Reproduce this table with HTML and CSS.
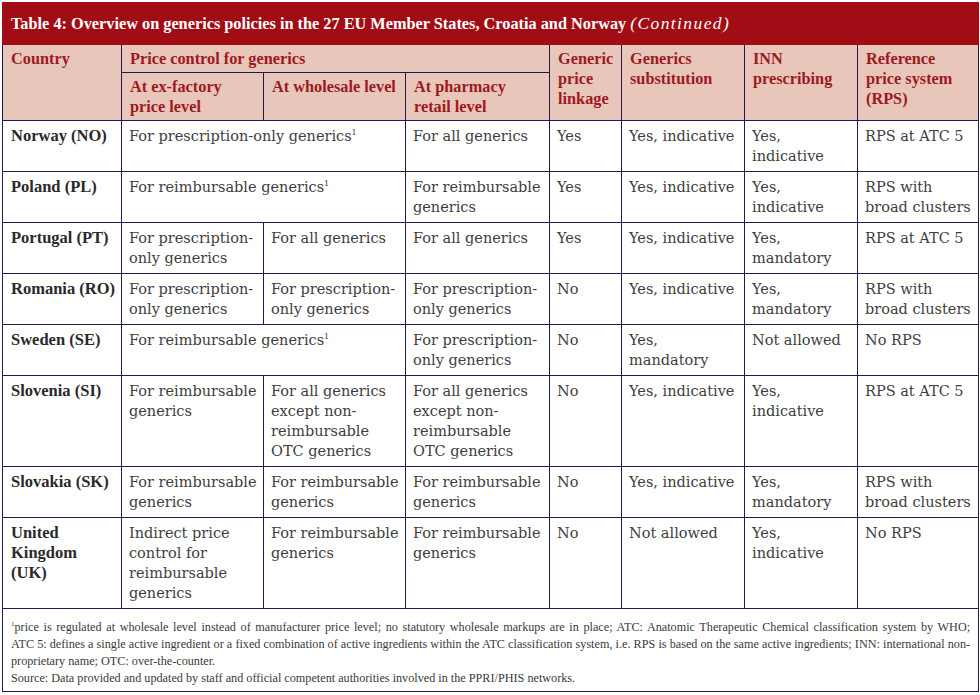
FILE: index.html
```html
<!DOCTYPE html>
<html>
<head>
<meta charset="utf-8">
<link rel="stylesheet" href="styles.css">
</head>
<body>
<table class="gtable">
  <colgroup>
    <col class="c-country">
    <col class="c-ex">
    <col class="c-whole">
    <col class="c-pharm">
    <col class="c-link">
    <col class="c-subst">
    <col class="c-inn">
    <col class="c-rps">
  </colgroup>
  <thead>
    <tr>
      <th class="title" colspan="8">Table 4: Overview on generics policies in the 27 EU Member States, Croatia and Norway <i>(Continued)</i></th>
    </tr>
    <tr class="h1">
      <th rowspan="2">Country</th>
      <th colspan="3">Price control for generics</th>
      <th rowspan="2">Generic price linkage</th>
      <th rowspan="2">Generics substitution</th>
      <th rowspan="2">INN prescribing</th>
      <th rowspan="2">Reference price system (RPS)</th>
    </tr>
    <tr class="h2">
      <th>At ex-factory price level</th>
      <th>At wholesale level</th>
      <th>At pharmacy retail level</th>
    </tr>
  </thead>
  <tbody>
    <tr>
      <td class="country">Norway (NO)</td>
      <td colspan="2">For prescription-only generics<sup>1</sup></td>
      <td>For all generics</td>
      <td>Yes</td>
      <td>Yes, indicative</td>
      <td>Yes, indicative</td>
      <td>RPS at ATC 5</td>
    </tr>
    <tr>
      <td class="country">Poland (PL)</td>
      <td colspan="2">For reimbursable generics<sup>1</sup></td>
      <td>For reimbursable generics</td>
      <td>Yes</td>
      <td>Yes, indicative</td>
      <td>Yes, indicative</td>
      <td>RPS with broad clusters</td>
    </tr>
    <tr>
      <td class="country">Portugal (PT)</td>
      <td>For prescription-only generics</td>
      <td>For all generics</td>
      <td>For all generics</td>
      <td>Yes</td>
      <td>Yes, indicative</td>
      <td>Yes, mandatory</td>
      <td>RPS at ATC 5</td>
    </tr>
    <tr>
      <td class="country">Romania (RO)</td>
      <td>For prescription-only generics</td>
      <td>For prescription-only generics</td>
      <td>For prescription-only generics</td>
      <td>No</td>
      <td>Yes, indicative</td>
      <td>Yes, mandatory</td>
      <td>RPS with broad clusters</td>
    </tr>
    <tr>
      <td class="country">Sweden (SE)</td>
      <td colspan="2">For reimbursable generics<sup>1</sup></td>
      <td>For prescription-only generics</td>
      <td>No</td>
      <td>Yes,<br>mandatory</td>
      <td>Not allowed</td>
      <td>No RPS</td>
    </tr>
    <tr>
      <td class="country">Slovenia (SI)</td>
      <td>For reimbursable generics</td>
      <td>For all generics except non-reimbursable OTC generics</td>
      <td>For all generics except non-reimbursable OTC generics</td>
      <td>No</td>
      <td>Yes, indicative</td>
      <td>Yes, indicative</td>
      <td>RPS at ATC 5</td>
    </tr>
    <tr>
      <td class="country">Slovakia (SK)</td>
      <td>For reimbursable generics</td>
      <td>For reimbursable generics</td>
      <td>For reimbursable generics</td>
      <td>No</td>
      <td>Yes, indicative</td>
      <td>Yes, mandatory</td>
      <td>RPS with broad clusters</td>
    </tr>
    <tr>
      <td class="country">United Kingdom<br>(UK)</td>
      <td>Indirect price control for reimbursable generics</td>
      <td>For reimbursable generics</td>
      <td>For reimbursable generics</td>
      <td>No</td>
      <td>Not allowed</td>
      <td>Yes, indicative</td>
      <td>No RPS</td>
    </tr>
  </tbody>
  <tfoot>
    <tr>
      <td class="notes" colspan="8">
        <p class="note-main"><sup>1</sup>price is regulated at wholesale level instead of manufacturer price level; no statutory wholesale markups are in place; ATC: Anatomic Therapeutic Chemical classification system by WHO; ATC&nbsp;5:&nbsp;defines a single active ingredient or a fixed combination of active ingredients within the ATC classification system, i.e. RPS is based on the same active ingredients; INN: international non-proprietary name; OTC: over-the-counter.</p>
        <p class="note-src">Source: Data provided and updated by staff and official competent authorities involved in the PPRI/PHIS networks.</p>
      </td>
    </tr>
  </tfoot>
</table>
</body>
</html>
```
FILE: styles.css
```css
html, body {
  margin: 0;
  padding: 0;
  background: #ffffff;
}
body {
  padding: 2px 0 0 2px;
}
.gtable {
  border-collapse: collapse;
  table-layout: fixed;
  width: 976px;
  font-family: "Liberation Serif", "Times New Roman", serif;
}
.c-country { width: 119px; }
.c-ex { width: 142px; }
.c-whole { width: 142px; }
.c-pharm { width: 144px; }
.c-link { width: 72px; }
.c-subst { width: 123px; }
.c-inn { width: 113px; }
.c-rps { width: 121px; }

.gtable th,
.gtable td {
  border: 1px solid #1f1a4a;
  text-align: left;
  vertical-align: top;
}
.gtable th.title {
  background: #a20c15;
  border: 1px solid #a20c15;
  color: #ffffff;
  font-size: 16.3px;
  font-weight: bold;
  height: 42px;
  padding: 0 8px;
  vertical-align: middle;
  box-sizing: border-box;
  line-height: 20px;
}
.gtable th.title i {
  font-weight: normal;
  font-size: 17.5px;
  letter-spacing: 1.4px;
}
.h1 th,
.h2 th {
  background: #e9c6ba;
  color: #9c1a1f;
  font-size: 16.3px;
  font-weight: bold;
  line-height: 20px;
  padding: 4px 6px 3px 8px;
}
.h1 th {
  height: 20px;
}
.h2 th {
  height: 40px;
}
.gtable tbody td {
  color: #3e3e3e;
  font-family: "DejaVu Serif", "Liberation Serif", serif;
  font-size: 14.5px;
  line-height: 20px;
  padding: 5px 2px 5px 7px;
  height: 40px;
}
.gtable tbody td.country {
  font-family: "Liberation Serif", "Times New Roman", serif;
  font-size: 16.5px;
  font-weight: bold;
  color: #2a2a2a;
  padding-left: 8px;
}
.gtable sup {
  font-size: 8px;
  line-height: 0;
  vertical-align: 6px;
}
.notes {
  color: #3a3a3a;
  font-size: 12.2px;
  line-height: 17px;
  padding: 10px 8px 4px 8px;
}
.notes p {
  margin: 0;
}
.note-main {
  text-align: justify;
}
.notes sup {
  font-size: 7px;
  vertical-align: 5px;
}
```
